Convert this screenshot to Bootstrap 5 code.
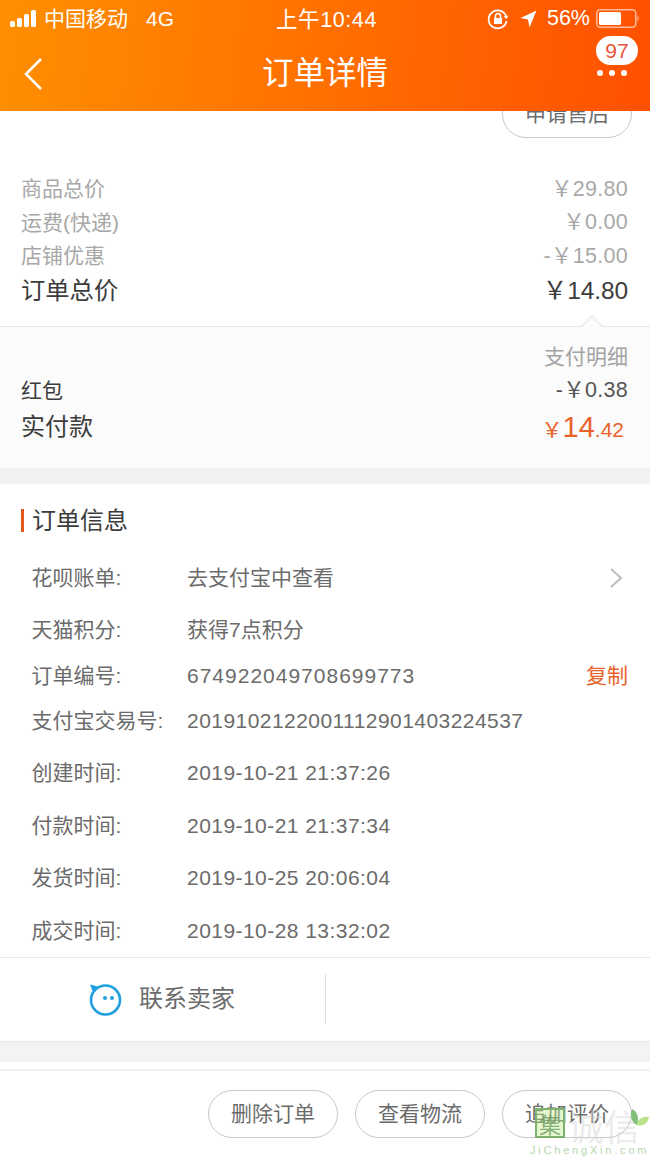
<!DOCTYPE html>
<html lang="zh-CN">
<head>
<meta charset="utf-8">
<title>订单详情</title>
<link rel="stylesheet" href="https://cdn.jsdelivr.net/npm/bootstrap@5.3.0/dist/css/bootstrap.min.css">
<style>
html,body{margin:0;width:650px;height:1156px;overflow:hidden;background:#fff}
body{font-family:"Liberation Sans","Noto Sans CJK SC",sans-serif;font-size:21px;color:#6b6b6b;position:relative}
.app-head{height:111px;background:linear-gradient(97deg,#ff8f00 0%,#ff5000 100%);color:#fff;position:relative;z-index:2}
.status-row{height:36px;padding:1px 10px 0;font-size:21px;color:#fff}
.sig{display:flex;align-items:flex-end;gap:2px;height:17px;margin-right:8px}
.sig i{display:block;width:5px;background:#fff;border-radius:1.5px}
.carrier{width:102px;white-space:nowrap}
.clock{position:absolute;left:3px;right:0;top:4px;text-align:center;font-size:21.5px;letter-spacing:.6px}
.status-r{margin-left:auto;gap:10px}
.status-r .pct{font-size:21.5px}
.title-row{height:75px;padding-left:22px}
.page-title{position:absolute;left:0;right:0;top:51px;text-align:center;font-size:31.500px;line-height:44px;color:#fff}
.more{position:absolute;left:596px;top:36px;width:42px}
.msg-count{width:42px;height:29px;border-radius:15px;background:#fff;color:#e8553a;font-size:21px;line-height:29px;text-align:center}
.more-dots{display:flex;gap:6px;margin-top:5px;padding-left:1px}
.more-dots i{width:6px;height:6px;border-radius:50%;background:#fff}
.clip-btn{height:61px;overflow:hidden;padding-right:18px}
.pill{width:130px;height:48px;border:1px solid #c8c8c8;border-radius:24px;background:#fff;color:#6b6b6b;font-size:21px;line-height:46px;padding:0;text-align:center}
.clip-btn .pill{margin-top:-21px;display:block}
.sum-wrap{padding:0 22px 0 21px;height:154px}
.sum-line{color:#a8a8a8;display:flex;justify-content:space-between;align-items:center;height:33.500px;font-size:21px}
.sum-line .amt{font-size:21.5px;letter-spacing:.3px}
.sum-total{color:#3c3c3c;font-size:24.300px;height:38px;display:flex;justify-content:space-between;align-items:center}
.sum-total .amt{font-size:24.5px;letter-spacing:-.1px}
.pay-panel{height:142px;background:#fbfbfb;border-top:1px solid #e6e6e6;padding:13px 22px 0 21px;position:relative}
.caret-up{position:absolute;left:584px;top:-9px;width:16px;height:16px;background:#fbfbfb;border-left:1px solid #e6e6e6;border-top:1px solid #e6e6e6;transform:rotate(45deg) scale(.95)}
.pay-help{text-align:right;color:#a3a3a3;height:33px;line-height:33px;font-size:21px}
.pay-red{display:flex;justify-content:space-between;align-items:center;height:34px;color:#3c3c3c;padding-top:1px}
.pay-red .amt{color:#555;font-size:21.5px;letter-spacing:.3px}
.pay-real{display:flex;justify-content:space-between;align-items:center;height:39px;color:#3c3c3c;font-size:24px;padding-top:1px}
.pay-real .amt{color:#e8622a;font-size:21px;padding-right:4px;line-height:1}
.pay-real .big{font-size:29px}
.gap-band{height:16px;background:#f2f2f2}
.info-title{height:73px;padding-left:21px;color:#3c3c3c;font-size:24px;display:flex;align-items:center}
.info-title::before{content:"";width:3px;height:23px;background:#e0581f;margin-right:8px}
.info-row{display:flex;align-items:center;padding:0 22px 0 31.500px;white-space:nowrap}
.info-label{width:155.500px;flex:none}
.info-val{flex:1}
.num-val{letter-spacing:.45px}
.order-no{letter-spacing:1px}
.copy-link{color:#e8622a}
.go-arrow{margin-right:5px}
.contact{height:85px;border-top:1px solid #e6e6e6;border-bottom:1px solid #e6e6e6;display:flex;align-items:center}
.contact-l{width:326px;height:50px;border-right:1px solid #ddd;display:flex;align-items:center;padding-left:89px;gap:17px;font-size:24px;margin-top:-1px}
.band2{height:20px;background:#f3f3f3}
.foot-line{height:9px;border-bottom:2px solid #f0f0f0}
.foot-bar{height:86px;padding:19px 18px 0 0;gap:17px}
.wm{position:absolute;left:534px;top:1108px;width:116px;height:48px;pointer-events:none;z-index:3}
.wm-sq{position:absolute;left:1px;top:0;width:30px;height:30px;border:2px solid #7cb26e;background:rgba(190,235,130,.4);color:rgba(107,154,98,.8);font-size:22px;line-height:26px;text-align:center;font-family:"Noto Sans CJK SC",sans-serif}
.wm-cn{position:absolute;left:34px;top:-3px;font-size:36px;line-height:40px;color:rgba(215,215,215,.5);white-space:nowrap;font-family:"Noto Sans CJK SC",sans-serif}
.wm-en{position:absolute;left:-4px;top:35px;font-size:11px;letter-spacing:2.800px;color:#b5d6ae;line-height:14px;white-space:nowrap}
.wm-leaf{position:absolute;left:95px;top:1px}
</style>
</head>
<body>
<header class="app-head">
  <div class="status-row d-flex align-items-center">
    <div class="sig"><i style="height:6px"></i><i style="height:9px"></i><i style="height:13px"></i><i style="height:17px"></i></div>
    <div class="carrier">中国移动</div><div>4G</div>
    <div class="clock">上午10:44</div>
    <div class="status-r d-flex align-items-center">
      <svg width="22" height="22" viewBox="0 0 22 22" fill="none" stroke="#fff" stroke-width="1.700" style="margin-right:-3px"><path d="M19 8A9 9 0 1 0 19.500 13"/><path d="M16.500 8.500 19.500 11 21.500 7.500" fill="#fff" stroke="none"/><rect x="7" y="10" width="8" height="6" fill="#fff" stroke="none"/><path d="M8.500 10V8a2.500 2.500 0 0 1 5 0v2"/></svg>
      <svg width="17" height="18" viewBox="0 0 17 18" class="ms-1"><path d="M16.500 .5 9.500 17.500 8 9.500 .5 8z" fill="#fff"/></svg>
      <span class="pct">56%</span>
      <svg width="44" height="20" viewBox="0 0 44 20" style="margin-left:-4px;margin-right:0"><rect x=".75" y=".75" width="39" height="17.500" rx="3.500" fill="none" stroke="#fff" stroke-opacity=".6" stroke-width="1.500"/><rect x="3" y="3" width="22" height="13" rx="1.500" fill="#fff"/><path d="M41.500 6.500c1.500.5 1.500 5.500 0 6z" fill="#fff" fill-opacity=".6"/></svg>
    </div>
  </div>
  <div class="title-row d-flex align-items-center">
    <svg width="22" height="36" viewBox="0 0 22 36" fill="none" stroke="#fff" stroke-width="2.500"><path d="M19 3 4 18 19 33"/></svg>
  </div>
  <div class="page-title">订单详情</div>
  <div class="more">
    <div class="msg-count">97</div>
    <div class="more-dots"><i></i><i></i><i></i></div>
  </div>
</header>

<main>
  <div class="clip-btn d-flex justify-content-end"><div><button type="button" class="btn pill">申请售后</button></div></div>
  <section class="sum-wrap">
    <div class="sum-line"><span>商品总价</span><span class="amt">￥29.80</span></div>
    <div class="sum-line"><span>运费(快递)</span><span class="amt">￥0.00</span></div>
    <div class="sum-line"><span>店铺优惠</span><span class="amt">-￥15.00</span></div>
    <div class="sum-total"><span>订单总价</span><span class="amt">￥14.80</span></div>
  </section>
  <section class="pay-panel">
    <div class="caret-up"></div>
    <div class="pay-help">支付明细</div>
    <div class="pay-red"><span>红包</span><span class="amt">-￥0.38</span></div>
    <div class="pay-real"><span>实付款</span><span class="amt">￥<span class="big">14</span>.42</span></div>
  </section>
  <div class="gap-band"></div>
  <section>
    <div class="info-title">订单信息</div>
    <div class="info-row" style="height:42px"><span class="info-label">花呗账单:</span><span class="info-val">去支付宝中查看</span>
      <svg width="14" height="22" viewBox="0 0 14 22" fill="none" stroke="#bdbdbd" stroke-width="2" class="go-arrow"><path d="M2 2 12 11 2 20"/></svg></div>
    <div class="info-row" style="height:52px;margin-top:5px"><span class="info-label">天猫积分:</span><span class="info-val">获得7点积分</span></div>
    <div class="info-row" style="height:40px"><span class="info-label">订单编号:</span><span class="info-val order-no">674922049708699773</span><span class="copy-link">复制</span></div>
    <div class="info-row" style="height:50px"><span class="info-label">支付宝交易号:</span><span class="info-val num-val">2019102122001112901403224537</span></div>
    <div class="info-row" style="height:53px"><span class="info-label">创建时间:</span><span class="info-val num-val">2019-10-21 21:37:26</span></div>
    <div class="info-row" style="height:53px"><span class="info-label">付款时间:</span><span class="info-val num-val">2019-10-21 21:37:34</span></div>
    <div class="info-row" style="height:52px"><span class="info-label">发货时间:</span><span class="info-val num-val">2019-10-25 20:06:04</span></div>
    <div class="info-row" style="height:53px"><span class="info-label">成交时间:</span><span class="info-val num-val">2019-10-28 13:32:02</span></div>
  </section>
  <section class="contact">
    <div class="contact-l">
      <svg width="33" height="33" viewBox="0 0 33 33" fill="none"><circle cx="16.500" cy="17" r="14.500" stroke="#1f9fe0" stroke-width="2.600"/><path d="M1 1.500 9 3.500 3.500 8z" fill="#1f9fe0"/><circle cx="16" cy="15" r="2" fill="#1f9fe0"/><circle cx="23" cy="15" r="2" fill="#1f9fe0"/></svg>
      <span>联系卖家</span>
    </div>
  </section>
  <div class="band2"></div>
  <div class="foot-line"></div>
  <footer class="foot-bar d-flex justify-content-end">
    <button type="button" class="btn pill">删除订单</button>
    <button type="button" class="btn pill">查看物流</button>
    <button type="button" class="btn pill">追加评价</button>
  </footer>
</main>
<div class="wm">
  <div class="wm-sq">集</div>
  <div class="wm-cn">诚信</div>
  <svg class="wm-leaf" width="21" height="22" viewBox="0 0 21 22"><path d="M3 0c6 3 7 9 5 16C3 14 0 6 3 0z" fill="#7fbf76"/><path d="M8 16c1-6 5-9 12-8-1 6-6 10-12 8z" fill="#b9e38a"/></svg>
  <div class="wm-en">JiChengXin.com</div>
</div>
</body>
</html>
